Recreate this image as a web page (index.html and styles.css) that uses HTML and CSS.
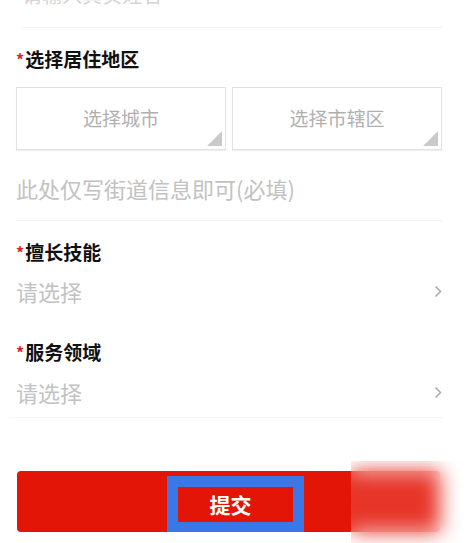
FILE: index.html
```html
<!DOCTYPE html>
<html lang="zh-CN">
<head>
<meta charset="utf-8">
<title>表单</title>
<link rel="stylesheet" href="styles.css">
</head>
<body>
<div class="form">
  <div class="row-cut"><span class="ph">请输入真实姓名</span></div>

  <div class="label label-area"><span class="req">*</span>选择居住地区</div>
  <div class="selects">
    <div class="sel"><span>选择城市</span><i class="tri"></i></div>
    <div class="sel"><span>选择市辖区</span><i class="tri"></i></div>
  </div>
  <div class="addr"><span class="ph">此处仅写街道信息即可(必填)</span></div>

  <div class="label label-skill"><span class="req">*</span>擅长技能</div>
  <div class="pick pick-skill">
    <span class="ph">请选择</span>
    <svg class="chev" width="10" height="13" viewBox="0 0 10 13"><path d="M2.5 1.5 L7.5 6.5 L2.5 11.5" fill="none" stroke="#a8a8a8" stroke-width="1.5"/></svg>
  </div>

  <div class="label label-domain"><span class="req">*</span>服务领域</div>
  <div class="pick pick-domain">
    <span class="ph">请选择</span>
    <svg class="chev" width="10" height="13" viewBox="0 0 10 13"><path d="M2.5 1.5 L7.5 6.5 L2.5 11.5" fill="none" stroke="#a8a8a8" stroke-width="1.5"/></svg>
  </div>

  <div class="submit-wrap">
    <button class="submit"><span class="hl"><span class="hl-inner">提交</span></span></button>
    <div class="blur"></div>
  </div>
</div>
</body>
</html>
```

FILE: styles.css
```css
html, body {
  margin: 0;
  padding: 0;
  background: #ffffff;
}
body {
  font-family: "Noto Sans CJK SC", "Noto Sans", sans-serif;
  width: 471px;
  height: 543px;
  overflow: hidden;
}
.form {
  padding: 0 28px 0 16px;
  position: relative;
}
.ph {
  color: #c2c2c2;
  font-size: 22px;
}
.row-cut {
  margin-top: -20px;
  margin-left: 6px;
  height: 30px;
  line-height: 30px;
  padding-bottom: 17px;
  border-bottom: 1px solid #f2f2f2;
}
.row-cut .ph {
  color: #d4d4d4;
  font-size: 20px;
}
.label {
  font-size: 19px;
  font-weight: 700;
  color: #111;
  line-height: 24px;
  height: 24px;
}
.req {
  color: #e02020;
  font-size: 16px;
  margin-right: 1px;
  position: relative;
  top: -1px;
}
.label-area { margin-top: 19px; }
.selects {
  margin-top: 16px;
  display: flex;
  gap: 6px;
}
.sel {
  position: relative;
  width: 208px;
  height: 61px;
  border: 1px solid #e2e2e2;
  box-shadow: 0 1px 1px rgba(0,0,0,0.06);
  display: flex;
  align-items: center;
  justify-content: center;
  color: #b0b0b0;
  font-size: 19px;
}
.sel span {
  margin-top: -2px;
}
.tri {
  position: absolute;
  right: 3px;
  bottom: 3px;
  width: 0;
  height: 0;
  border-style: solid;
  border-width: 0 0 15px 15px;
  border-color: transparent transparent #cacaca transparent;
}
.addr {
  margin-top: 23px;
  height: 30px;
  line-height: 30px;
  padding-bottom: 17px;
  border-bottom: 1px solid #f2f2f2;
}
.label-skill { margin-top: 19px; }
.pick {
  display: flex;
  align-items: center;
  justify-content: space-between;
  height: 30px;
  line-height: 30px;
}
.pick .ph {
  font-size: 22px;
}
.pick-skill {
  margin-top: 12px;
  padding-bottom: 27px;
}
.chev { margin-right: 0; }
.label-domain { margin-top: 7px; }
.pick-domain {
  margin-top: 13px;
  padding-bottom: 10px;
  border-bottom: 1px solid #f4f4f4;
  margin-left: -6px;
  padding-left: 6px;
}
.submit-wrap {
  margin-top: 53px;
  position: relative;
  margin-left: 1px;
  margin-right: 3px;
}
.submit {
  display: block;
  width: 100%;
  height: 61px;
  border: 0;
  border-radius: 4px;
  background: #e31506;
  padding: 0;
  position: relative;
  font-family: inherit;
}
.hl {
  position: absolute;
  left: 150px;
  top: 5px;
  width: 137px;
  height: 56px;
  background: #3a78e6;
  box-sizing: border-box;
  padding: 11px 11px 10px 11px;
}
.hl-inner {
  display: flex;
  height: 100%;
  background: #e31506;
  color: #fff;
  font-size: 21px;
  font-weight: 700;
  align-items: center;
  justify-content: center;
  padding-right: 10px;
  box-sizing: border-box;
  line-height: 1;
}
.blur {
  position: absolute;
  left: 334px;
  top: -10px;
  width: 137px;
  height: 90px;
  backdrop-filter: blur(10px);
  -webkit-backdrop-filter: blur(10px);
  background: rgba(255,255,255,0.14);
}
```
